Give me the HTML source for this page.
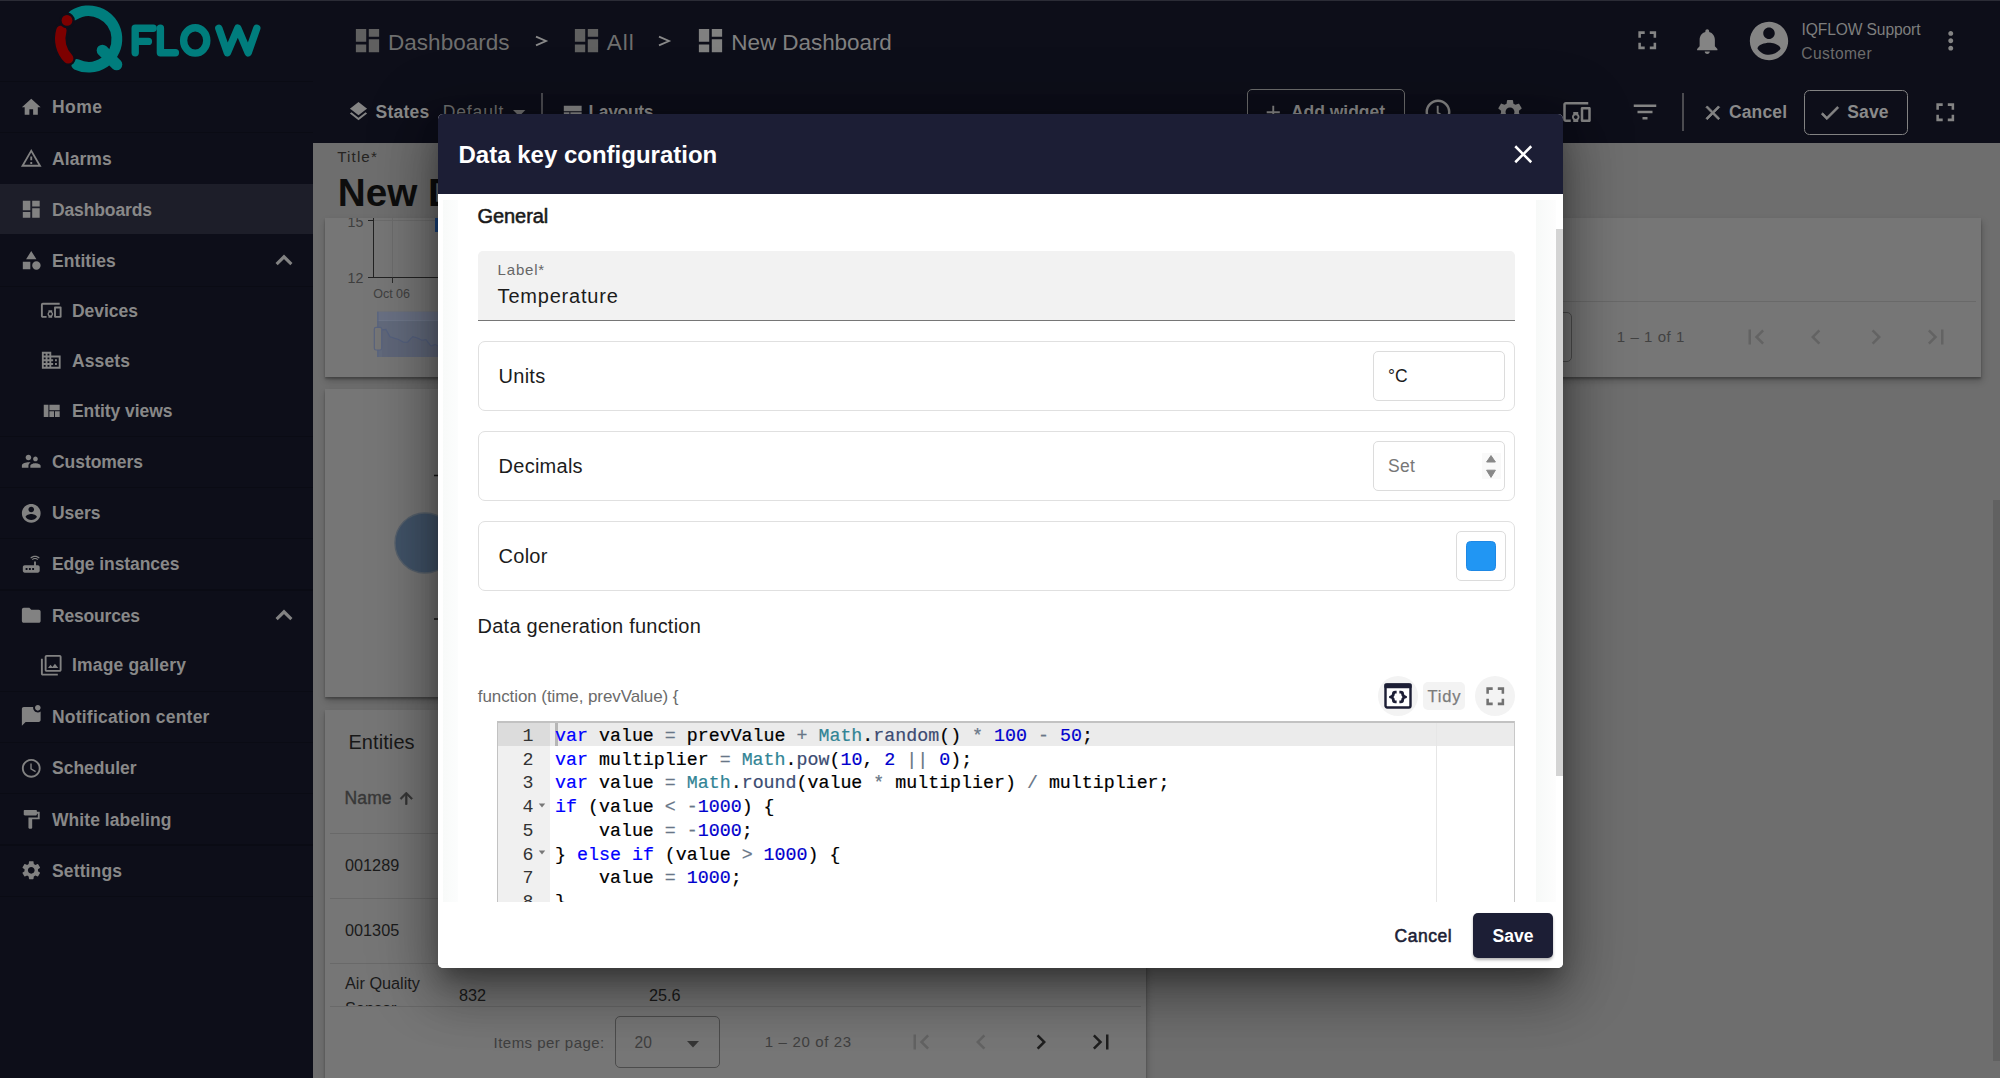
<!DOCTYPE html>
<html>
<head>
<meta charset="utf-8">
<title>Data key configuration</title>
<style>
*{box-sizing:border-box;margin:0;padding:0}
html,body{width:2000px;height:1078px;overflow:hidden}
body{position:relative;background:#6e6e6e;font-family:"Liberation Sans",sans-serif;color:#111}
.abs{position:absolute}
.t{position:absolute;white-space:pre}
svg{position:absolute;display:block;overflow:visible}
#side{left:0;top:0;width:312.5px;height:1078px;background:#0d0e19}
#head{left:312px;top:0;width:1688px;height:143px;background:#0d0e19}
#topline{left:0;top:0;width:2000px;height:1.25px;background:#2b2c36}
#main{left:312px;top:143px;width:1688px;height:935px;overflow:hidden}
.mi{font-weight:700;color:#888}
.bc{color:#6e6e6e}
.card{background:#767676;box-shadow:0 2px 2px rgba(0,0,0,.25),1px 4px 7px rgba(0,0,0,.22)}
#dlg{left:437.5px;top:113.75px;width:1125px;height:853.75px;background:#fff;border-radius:5px;box-shadow:0 14px 20px -6px rgba(0,0,0,.3),0 30px 48px 4px rgba(0,0,0,.2),0 8px 60px 12px rgba(0,0,0,.25);overflow:hidden}
.mono{font-family:"Liberation Mono",monospace}

</style>
</head>
<body>
<div id="head" class="abs">
<svg viewBox="0 0 24 24" width="31" height="31" style="left:40.20px;top:25.10px;"><path fill="#606060" d="M3 13h8V3H3v10zm0 8h8v-6H3v6zm10 0h8V11h-8v10zm0-18v6h8V3h-8z"/></svg>
<div class="t bc" style="letter-spacing:0.030px;left:76px;top:30px;font-size:22.5px;line-height:25px;">Dashboards</div>
<svg width="14" height="14" viewBox="0 0 14 14" style="left:222px;top:33.6px"><path d="M2 2.6L12 7L2 11.4" fill="none" stroke="#8a8a8a" stroke-width="1.8"/></svg>
<svg viewBox="0 0 24 24" width="31" height="31" style="left:259.20px;top:25.10px;"><path fill="#606060" d="M3 13h8V3H3v10zm0 8h8v-6H3v6zm10 0h8V11h-8v10zm0-18v6h8V3h-8z"/></svg>
<div class="t bc" style="letter-spacing:0.992px;left:294.70000000000005px;top:30px;font-size:22.5px;line-height:25px;">All</div>
<svg width="14" height="14" viewBox="0 0 14 14" style="left:345px;top:33.6px"><path d="M2 2.6L12 7L2 11.4" fill="none" stroke="#8a8a8a" stroke-width="1.8"/></svg>
<svg viewBox="0 0 24 24" width="31" height="31" style="left:383.00px;top:25.10px;"><path fill="#808080" d="M3 13h8V3H3v10zm0 8h8v-6H3v6zm10 0h8V11h-8v10zm0-18v6h8V3h-8z"/></svg>
<div class="t " style="letter-spacing:-0.062px;left:419.29999999999995px;top:30px;font-size:22.5px;line-height:25px;color:#808080">New Dashboard</div>
<svg viewBox="0 0 24 24" width="30.5" height="30.5" style="left:1319.95px;top:25.45px;"><path fill="#848484" d="M7 14H5v5h5v-2H7v-3zm-2-4h2V7h3V5H5v5zm12 7h-3v2h5v-5h-2v3zM14 5v2h3v3h2V5h-5z"/></svg>
<svg viewBox="0 0 24 24" width="30.5" height="30.5" style="left:1379.75px;top:25.55px;"><path fill="#848484" d="M12 22c1.1 0 2-.9 2-2h-4c0 1.1.89 2 2 2zm6-6v-5c0-3.07-1.64-5.64-4.5-6.32V4c0-.83-.67-1.5-1.5-1.5s-1.5.67-1.5 1.5v.68C7.63 5.36 6 7.92 6 11v5l-2 2v1h16v-1l-2-2z"/></svg>
<svg viewBox="0 0 24 24" width="46" height="46" style="left:1434.20px;top:17.80px;"><path fill="#848484" d="M12 2C6.48 2 2 6.48 2 12s4.48 10 10 10 10-4.48 10-10S17.52 2 12 2zm0 3c1.66 0 3 1.34 3 3s-1.34 3-3 3-3-1.34-3-3 1.34-3 3-3zm0 14.2c-2.5 0-4.71-1.28-6-3.22.03-1.99 4-3.08 6-3.08 1.99 0 5.97 1.09 6 3.08-1.29 1.94-3.5 3.22-6 3.22z"/></svg>
<div class="t " style="letter-spacing:-0.113px;left:1489.5px;top:21px;font-size:15.6px;line-height:17px;color:#7e7e7e">IQFLOW Support</div>
<div class="t " style="letter-spacing:0.387px;left:1489.3px;top:45px;font-size:15.6px;line-height:17px;color:#6c6c6c">Customer</div>
<svg viewBox="0 0 24 24" width="29.5" height="29.5" style="left:1624.05px;top:26.25px;"><path fill="#848484" d="M12 8c1.1 0 2-.9 2-2s-.9-2-2-2-2 .9-2 2 .9 2 2 2zm0 2c-1.1 0-2 .9-2 2s.9 2 2 2 2-.9 2-2-.9-2-2-2zm0 6c-1.1 0-2 .9-2 2s.9 2 2 2 2-.9 2-2-.9-2-2-2z"/></svg>
<svg viewBox="0 0 24 24" width="23" height="23" style="left:35.25px;top:100.00px;"><path fill="#848484" d="M11.99 18.54l-7.37-5.73L3 14.07l9 7 9-7-1.63-1.27-7.38 5.74zM12 16l7.36-5.73L21 9l-9-7-9 7 1.63 1.27L12 16z"/></svg>
<div class="t mi" style="letter-spacing:0.214px;left:63.60000000000002px;top:102px;font-size:17.5px;line-height:20px;color:#8a8a8a">States</div>
<div class="t " style="letter-spacing:0.841px;left:130.8px;top:102px;font-size:17.5px;line-height:20px;color:#6e6e6e">Default</div>
<svg width="14" height="8" viewBox="0 0 14 8" style="left:200.79999999999995px;top:110px"><path d="M0 0H12.4L6.2 6.2z" fill="#6e6e6e"/></svg>
<div class="abs " style="left:229.20000000000005px;top:93px;width:1.5px;height:45px;background:#4b4b50"></div>
<svg viewBox="0 0 24 24" width="22.5" height="22.5" style="left:249.05px;top:100.75px;"><path fill="#848484" d="M3 19h6v-7H3v7zm7 0h12v-7H10v7zM3 5v6h19V5H3z"/></svg>
<div class="t mi" style="letter-spacing:-0.352px;left:276.5px;top:102px;font-size:17.5px;line-height:20px;color:#8a8a8a">Layouts</div>
<div class="abs " style="left:934.5999999999999px;top:89.2px;width:158.4px;height:46px;border:1.3px solid #6c6c6c;border-radius:5px"></div>
<svg viewBox="0 0 24 24" width="22.5" height="22.5" style="left:950.25px;top:100.75px;"><path fill="#848484" d="M19 13h-6v6h-2v-6H5v-2h6V5h2v6h6v2z"/></svg>
<div class="t mi" style="letter-spacing:-0.033px;left:979px;top:102px;font-size:17.5px;line-height:20px;color:#8a8a8a">Add widget</div>
<svg viewBox="0 0 24 24" width="30" height="30" style="left:1110.50px;top:96.90px;"><path fill="#848484" d="M11.99 2C6.47 2 2 6.48 2 12s4.47 10 9.99 10C17.52 22 22 17.52 22 12S17.52 2 11.99 2zM12 20c-4.42 0-8-3.58-8-8s3.58-8 8-8 8 3.58 8 8-3.58 8-8 8zm.5-13H11v6l5.25 3.15.75-1.23-4.5-2.67z"/></svg>
<svg viewBox="0 0 24 24" width="30" height="30" style="left:1182.50px;top:96.90px;"><path fill="#848484" d="M19.14 12.94c.04-.3.06-.61.06-.94 0-.32-.02-.64-.07-.94l2.03-1.58c.18-.14.23-.41.12-.61l-1.92-3.32c-.12-.22-.37-.29-.59-.22l-2.39.96c-.5-.38-1.03-.7-1.62-.94l-.36-2.54c-.04-.24-.24-.41-.48-.41h-3.84c-.24 0-.43.17-.47.41l-.36 2.54c-.59.24-1.13.57-1.62.94l-2.39-.96c-.22-.08-.47 0-.59.22L2.74 8.87c-.12.21-.08.47.12.61l2.03 1.58c-.05.3-.09.63-.09.94s.02.64.07.94l-2.03 1.58c-.18.14-.23.41-.12.61l1.92 3.32c.12.22.37.29.59.22l2.39-.96c.5.38 1.03.7 1.62.94l.36 2.54c.05.24.24.41.48.41h3.84c.24 0 .44-.17.47-.41l.36-2.54c.59-.24 1.13-.56 1.62-.94l2.39.96c.22.08.47 0 .59-.22l1.92-3.32c.12-.22.07-.47-.12-.61l-2.01-1.58zM12 15.6c-1.98 0-3.6-1.62-3.6-3.6s1.62-3.6 3.6-3.6 3.6 1.62 3.6 3.6-1.62 3.6-3.6 3.6z"/></svg>
<svg viewBox="0 0 24 24" width="30" height="30" style="left:1250.30px;top:97.00px;"><path fill="#848484" d="M3 6h18V4H3c-1.1 0-2 .9-2 2v12c0 1.1.9 2 2 2h4v-2H3V6zm10 6H9v1.78c-.61.55-1 1.33-1 2.22s.39 1.67 1 2.22V20h4v-1.78c.61-.55 1-1.34 1-2.22s-.39-1.67-1-2.22V12zm-2 5.5c-.83 0-1.5-.67-1.5-1.5s.67-1.5 1.5-1.5 1.5.67 1.5 1.5-.67 1.5-1.5 1.5zM22 8h-6c-.5 0-1 .5-1 1v10c0 .5.5 1 1 1h6c.5 0 1-.5 1-1V9c0-.5-.5-1-1-1zm-1 10h-4v-8h4v8z"/></svg>
<svg viewBox="0 0 24 24" width="30" height="30" style="left:1317.70px;top:97.00px;"><path fill="#848484" d="M10 18h4v-2h-4v2zM3 6v2h18V6H3zm3 7h12v-2H6v2z"/></svg>
<div class="abs " style="left:1370px;top:93px;width:1.6px;height:37.6px;background:#4b4b50"></div>
<svg viewBox="0 0 24 24" width="23.6" height="23.6" style="left:1388.70px;top:100.50px;stroke:#848484;stroke-width:0.8px"><path fill="#848484" d="M19 6.41L17.59 5 12 10.59 6.41 5 5 6.41 10.59 12 5 17.59 6.41 19 12 13.41 17.59 19 19 17.59 13.41 12z"/></svg>
<div class="t mi" style="letter-spacing:0.122px;left:1417px;top:102px;font-size:17.5px;line-height:20px;color:#8a8a8a">Cancel</div>
<div class="abs " style="left:1492px;top:89.6px;width:104px;height:45px;border:1.5px solid #828282;border-radius:5.5px"></div>
<svg viewBox="0 0 24 24" width="23.6" height="23.6" style="left:1506.20px;top:100.50px;stroke:#848484;stroke-width:0.8px"><path fill="#848484" d="M9 16.2L4.8 12l-1.4 1.4L9 19 21 7l-1.4-1.4L9 16.2z"/></svg>
<div class="t mi" style="letter-spacing:0.142px;left:1535.3px;top:102px;font-size:17.5px;line-height:20px;color:#8a8a8a">Save</div>
<svg viewBox="0 0 24 24" width="30.5" height="30.5" style="left:1618.15px;top:96.75px;"><path fill="#848484" d="M7 14H5v5h5v-2H7v-3zm-2-4h2V7h3V5H5v5zm12 7h-3v2h5v-5h-2v3zM14 5v2h3v3h2V5h-5z"/></svg>
</div>
<div id="main" class="abs">
<div class="abs card" style="left:13px;top:75px;width:821px;height:158.8px;overflow:hidden"><div class="abs " style="left:48px;top:2.4000000000000057px;width:800px;height:1px;background:#6c6c6c"></div><div class="abs " style="left:66.5px;top:0px;width:1px;height:60px;background:#6c6c6c"></div><div class="abs " style="left:47.69999999999999px;top:0px;width:1.5px;height:60px;background:#222"></div><div class="abs " style="left:42.5px;top:58.60000000000002px;width:800px;height:1.4px;background:#222"></div><div class="abs " style="left:42.5px;top:2.1999999999999886px;width:6px;height:1.3px;background:#222"></div><div class="abs " style="left:66.5px;top:59px;width:1px;height:5.6px;background:#2c2c2c"></div><div class="abs " style="left:110.19999999999999px;top:0px;width:3px;height:13.8px;background:#1a417a"></div><div class="t " style="left:22.5px;top:-4px;font-size:14.2px;line-height:16px;color:#3e3e3e">15</div><div class="t " style="left:22.5px;top:52px;font-size:14.2px;line-height:16px;color:#3e3e3e">12</div><div class="t " style="letter-spacing:-0.046px;left:48.30000000000001px;top:69px;font-size:12.5px;line-height:14px;color:#404040">Oct 06</div><svg width="200" height="60" viewBox="0 0 200 60" style="left:45px;top:87px">
<rect x="7.3" y="6.8" width="200" height="45.2" fill="#626a7c"/>
<rect x="7.3" y="6.8" width="200" height="8.4" fill="#697083"/>
<path d="M7.3 15.6H200" stroke="#70788b" stroke-width="1" fill="none"/>
<path d="M12.1 24.9L15.9 24.4L20.1 31.9L28.5 34.4L33.5 37.2L37.6 37.2L42.7 31.6L46.8 32.7L51.8 35.2L56 34.7L61 41.1L65.2 39.4L68 41.1V52H12.1z" fill="#5f6679" stroke="none"/>
<path d="M12.1 24.9L15.9 24.4L20.1 31.9L28.5 34.4L33.5 37.2L37.6 37.2L42.7 31.6L46.8 32.7L51.8 35.2L56 34.7L61 41.1L65.2 39.4L68 41.1" fill="none" stroke="#54607e" stroke-width="1.1"/>
<path d="M7.9 6.8V52" stroke="#5a6580" stroke-width="1.2" fill="none"/>
<rect x="4.3" y="22.4" width="7.4" height="22.6" rx="1.8" fill="#767676" stroke="#59637e" stroke-width="1.2"/>
</svg></div>
<div class="t " style="letter-spacing:1.091px;left:25.30000000000001px;top:5px;font-size:15.2px;line-height:17px;color:#262422">Title*</div>
<div class="t " style="left:25.80000000000001px;top:28px;font-size:38.7px;line-height:43px;color:#0d0d0d;font-weight:700">New Dashboard</div>
<div class="abs card" style="left:13px;top:246px;width:821px;height:308px;"><svg width="200" height="308" viewBox="0 0 200 308" style="left:0;top:0">
<circle cx="100" cy="154" r="30" fill="#415368" stroke="#57616c" stroke-width="1.4"/>
<path d="M109 86.5h5M109 230h5" stroke="#161616" stroke-width="1.4"/></svg></div>
<div class="abs card" style="left:13px;top:567px;width:821px;height:400px;"><div class="t " style="letter-spacing:0.087px;left:23.399999999999977px;top:21px;font-size:20px;line-height:22px;color:#181818">Entities</div><div class="t " style="letter-spacing:0.104px;left:19.600000000000023px;top:78px;font-size:17.5px;line-height:20px;color:#383838;-webkit-text-stroke:0.4px #383838">Name</div><svg viewBox="0 0 24 24" width="18.6" height="18.6" style="left:72.10px;top:78.70px;stroke:#353535;stroke-width:0.9px"><path fill="#353535" d="M4 12l1.41 1.41L11 7.83V20h2V7.83l5.58 5.59L20 12l-8-8-8 8z"/></svg><div class="abs " style="left:5px;top:122.5px;width:810.5px;height:1.2px;background:#696969"></div><div class="abs " style="left:5px;top:187.5px;width:810.5px;height:1.2px;background:#696969"></div><div class="abs " style="left:5px;top:252.5px;width:810.5px;height:1.2px;background:#696969"></div><div class="abs " style="left:5px;top:295.79999999999995px;width:810.5px;height:1.2px;background:#696969"></div><div class="t " style="left:20px;top:146px;font-size:16.25px;line-height:18px;color:#1b1b1b">001289</div><div class="t " style="left:20px;top:211px;font-size:16.25px;line-height:18px;color:#1b1b1b">001305</div><div class="abs " style="left:0px;top:253.70000000000005px;width:821px;height:42px;overflow:hidden"><div class="t " style="left:20px;top:10.3px;font-size:16.25px;line-height:18px;color:#1b1b1b">Air Quality</div><div class="t " style="left:20px;top:35.3px;font-size:16.25px;line-height:18px;color:#1b1b1b">Sensor</div><div class="t " style="left:134px;top:22.3px;font-size:16.25px;line-height:18px;color:#1b1b1b">832</div><div class="t " style="left:324px;top:22.3px;font-size:16.25px;line-height:18px;color:#1b1b1b">25.6</div></div><div class="t " style="letter-spacing:0.455px;left:168.60000000000002px;top:324px;font-size:15px;line-height:17px;color:#404040">Items per page:</div><div class="abs " style="left:290px;top:306.29999999999995px;width:104.5px;height:51.4px;border:1.3px solid #4c4c4c;border-radius:5px"></div><div class="t " style="letter-spacing:0.041px;left:309.6px;top:324px;font-size:15.6px;line-height:17px;color:#404040">20</div><svg width="14" height="8" viewBox="0 0 14 8" style="left:362.4px;top:330.79999999999995px"><path d="M0 0H12L6 6.4z" fill="#363636"/></svg><div class="t " style="letter-spacing:0.651px;left:439.79999999999995px;top:323px;font-size:15px;line-height:17px;color:#404040">1 – 20 of 23</div><svg viewBox="0 0 24 24" width="30" height="30" style="left:581.00px;top:317.00px;"><path fill="#636363" d="M18.41 16.59L13.82 12l4.59-4.59L17 6l-6 6 6 6zM6 6h2v12H6z"/></svg><svg viewBox="0 0 24 24" width="30" height="30" style="left:641.00px;top:317.00px;"><path fill="#636363" d="M15.41 7.41L14 6l-6 6 6 6 1.41-1.41L10.83 12z"/></svg><svg viewBox="0 0 24 24" width="30" height="30" style="left:701.00px;top:317.00px;"><path fill="#1f1f1f" d="M10 6L8.59 7.41 13.17 12l-4.58 4.59L10 18l6-6z"/></svg><svg viewBox="0 0 24 24" width="30" height="30" style="left:761.00px;top:317.00px;"><path fill="#1f1f1f" d="M5.59 7.41L10.18 12l-4.59 4.59L7 18l6-6-6-6zM16 6h2v12h-2z"/></svg></div>
<div class="abs card" style="left:848px;top:75px;width:821px;height:158.8px;"><div class="abs " style="left:5px;top:82.80000000000001px;width:810.5px;height:1.2px;background:#696969"></div><div class="abs " style="left:308px;top:93.5px;width:104px;height:50.5px;border:1.3px solid #4e4e4e;border-radius:5px"></div><div class="t " style="letter-spacing:0.560px;left:456.79999999999995px;top:110px;font-size:15px;line-height:17px;color:#424242">1 – 1 of 1</div><svg viewBox="0 0 24 24" width="30" height="30" style="left:581.00px;top:104.00px;"><path fill="#636363" d="M18.41 16.59L13.82 12l4.59-4.59L17 6l-6 6 6 6zM6 6h2v12H6z"/></svg><svg viewBox="0 0 24 24" width="30" height="30" style="left:641.00px;top:104.00px;"><path fill="#636363" d="M15.41 7.41L14 6l-6 6 6 6 1.41-1.41L10.83 12z"/></svg><svg viewBox="0 0 24 24" width="30" height="30" style="left:700.50px;top:104.00px;"><path fill="#636363" d="M10 6L8.59 7.41 13.17 12l-4.58 4.59L10 18l6-6z"/></svg><svg viewBox="0 0 24 24" width="30" height="30" style="left:760.50px;top:104.00px;"><path fill="#636363" d="M5.59 7.41L10.18 12l-4.59 4.59L7 18l6-6-6-6zM16 6h2v12h-2z"/></svg></div>
<div class="abs " style="left:1681px;top:356.5px;width:7px;height:561px;background:#616161"></div>
</div>
<div id="side" class="abs">
<div class="abs " style="left:0px;top:184.2px;width:312.5px;height:50.1px;background:#1d1e29"></div>
<svg width="312" height="84" viewBox="0 0 312 84" style="left:0;top:0">
<g fill="none" stroke-linecap="round" stroke-linejoin="round">
<path d="M73.4 15.3 A28.2 28.2 0 1 1 76.6 64.5" stroke="#007d7d" stroke-width="10.8"/>
<path d="M102.4 50.4 L116.6 64.6" stroke="#007d7d" stroke-width="11.4"/>
<path d="M61.4 30.6 A28.2 28.2 0 0 0 68.2 58.4" stroke="#0d0e19" stroke-width="14.8"/>
<path d="M61.4 30.6 A28.2 28.2 0 0 0 68.2 58.4" stroke="#7d0000" stroke-width="10.4"/>
<circle cx="67" cy="20.4" r="7.8" fill="#0d0e19" stroke="none"/>
<circle cx="67" cy="20.4" r="5.4" fill="#7d0000" stroke="none"/>
<g stroke="#007d7d" stroke-width="7.4">
<path d="M135.2 52.8V28.2H153.2M135.2 41.4H148.4"/>
<path d="M160.4 28.2V52.8H175.4"/>
<ellipse cx="195.2" cy="40.4" rx="11.6" ry="12.7"/>
<path d="M218.8 28.2L227.4 52.8L237.8 28.2L248.2 52.8L256.8 28.2"/>
</g></g></svg>
<svg viewBox="0 0 24 24" width="22.5" height="22.5" style="left:20.05px;top:95.75px;"><path fill="#828282" d="M10 20v-6h4v6h5v-8h3L12 3 2 12h3v8z"/></svg>
<div class="t mi" style="letter-spacing:0.458px;left:52px;top:97px;font-size:17.5px;line-height:20px;">Home</div>
<svg viewBox="0 0 24 24" width="22.5" height="22.5" style="left:20.05px;top:147.05px;"><path fill="#828282" d="M12 5.99L19.53 19H4.47L12 5.99M12 2L1 21h22L12 2zm1 14h-2v2h2v-2zm0-6h-2v4h2v-4z"/></svg>
<div class="t mi" style="letter-spacing:0.071px;left:52px;top:149px;font-size:17.5px;line-height:20px;">Alarms</div>
<svg viewBox="0 0 24 24" width="22.5" height="22.5" style="left:20.05px;top:198.25px;"><path fill="#828282" d="M3 13h8V3H3v10zm0 8h8v-6H3v6zm10 0h8V11h-8v10zm0-18v6h8V3h-8z"/></svg>
<div class="t mi" style="letter-spacing:-0.127px;left:52px;top:200px;font-size:17.5px;line-height:20px;">Dashboards</div>
<svg viewBox="0 0 24 24" width="22.5" height="22.5" style="left:20.05px;top:249.25px;"><path fill="#828282" d="M12 2l-5.5 9h11z M22 17.5a4.5 4.5 0 1 1-9 0a4.5 4.5 0 1 1 9 0z M3 13.5h8v8H3z"/></svg>
<div class="t mi" style="letter-spacing:0.069px;left:52px;top:251px;font-size:17.5px;line-height:20px;">Entities</div>
<svg viewBox="0 0 24 24" width="22.5" height="22.5" style="left:40.05px;top:299.35px;"><path fill="#828282" d="M3 6h18V4H3c-1.1 0-2 .9-2 2v12c0 1.1.9 2 2 2h4v-2H3V6zm10 6H9v1.78c-.61.55-1 1.33-1 2.22s.39 1.67 1 2.22V20h4v-1.78c.61-.55 1-1.34 1-2.22s-.39-1.67-1-2.22V12zm-2 5.5c-.83 0-1.5-.67-1.5-1.5s.67-1.5 1.5-1.5 1.5.67 1.5 1.5-.67 1.5-1.5 1.5zM22 8h-6c-.5 0-1 .5-1 1v10c0 .5.5 1 1 1h6c.5 0 1-.5 1-1V9c0-.5-.5-1-1-1zm-1 10h-4v-8h4v8z"/></svg>
<div class="t mi" style="letter-spacing:-0.029px;left:72px;top:301px;font-size:17.5px;line-height:20px;">Devices</div>
<svg viewBox="0 0 24 24" width="22.5" height="22.5" style="left:40.05px;top:349.45px;"><path fill="#828282" d="M12 7V3H2v18h20V7H12zM6 19H4v-2h2v2zm0-4H4v-2h2v2zm0-4H4V9h2v2zm0-4H4V5h2v2zm4 12H8v-2h2v2zm0-4H8v-2h2v2zm0-4H8V9h2v2zm0-4H8V5h2v2zm10 12h-8v-2h2v-2h-2v-2h2v-2h-2V9h8v10zm-2-8h-2v2h2v-2zm0 4h-2v2h2v-2z"/></svg>
<div class="t mi" style="letter-spacing:0.119px;left:72px;top:351px;font-size:17.5px;line-height:20px;">Assets</div>
<svg viewBox="0 0 24 24" width="22.5" height="22.5" style="left:40.05px;top:399.75px;"><path fill="#828282" d="M10 18h5v-6h-5v6zm-6 0h5V5H4v13zm12 0h5v-6h-5v6zM10 5v6h11V5H10z"/></svg>
<div class="t mi" style="letter-spacing:-0.051px;left:72px;top:401px;font-size:17.5px;line-height:20px;">Entity views</div>
<svg viewBox="0 0 24 24" width="22.5" height="22.5" style="left:20.05px;top:450.35px;"><path fill="#828282" d="M16.5 12c1.38 0 2.49-1.12 2.49-2.5S17.88 7 16.5 7C15.12 7 14 8.12 14 9.5s1.12 2.5 2.5 2.5zM9 11c1.66 0 2.99-1.34 2.99-3S10.66 5 9 5C7.34 5 6 6.34 6 8s1.34 3 3 3zm7.5 3c-1.83 0-5.5.92-5.5 2.75V19h11v-2.25c0-1.83-3.67-2.75-5.5-2.75zM9 13c-2.33 0-7 1.17-7 3.5V19h7v-2.25c0-.85.33-2.34 2.37-3.47C10.5 13.1 9.66 13 9 13z"/></svg>
<div class="t mi" style="letter-spacing:-0.053px;left:52px;top:452px;font-size:17.5px;line-height:20px;">Customers</div>
<svg viewBox="0 0 24 24" width="22.5" height="22.5" style="left:20.05px;top:501.75px;"><path fill="#828282" d="M12 2C6.48 2 2 6.48 2 12s4.48 10 10 10 10-4.48 10-10S17.52 2 12 2zm0 3c1.66 0 3 1.34 3 3s-1.34 3-3 3-3-1.34-3-3 1.34-3 3-3zm0 14.2c-2.5 0-4.71-1.28-6-3.22.03-1.99 4-3.08 6-3.08 1.99 0 5.97 1.09 6 3.08-1.29 1.94-3.5 3.22-6 3.22z"/></svg>
<div class="t mi" style="letter-spacing:-0.064px;left:52px;top:503px;font-size:17.5px;line-height:20px;">Users</div>
<svg viewBox="0 0 24 24" width="22.5" height="22.5" style="left:20.05px;top:552.85px;"><path fill="#828282" d="M20.2 5.9l.8-.8C19.6 3.7 17.8 3 16 3s-3.6.7-5 2.1l.8.8C13 4.8 14.5 4.2 16 4.2s3 .6 4.2 1.7zm-.9.8c-.9-.9-2.1-1.4-3.3-1.4s-2.4.5-3.3 1.4l.8.8c.7-.7 1.6-1 2.5-1 .9 0 1.8.3 2.5 1l.8-.8zM19 13h-2V9h-2v4H5c-1.1 0-2 .9-2 2v4c0 1.1.9 2 2 2h14c1.1 0 2-.9 2-2v-4c0-1.1-.9-2-2-2zM8 18H6v-2h2v2zm3.5 0h-2v-2h2v2zm3.5 0h-2v-2h2v2z"/></svg>
<div class="t mi" style="letter-spacing:-0.076px;left:52px;top:554px;font-size:17.5px;line-height:20px;">Edge instances</div>
<svg viewBox="0 0 24 24" width="22.5" height="22.5" style="left:20.05px;top:604.25px;"><path fill="#828282" d="M10 4H4c-1.1 0-1.99.9-1.99 2L2 18c0 1.1.9 2 2 2h16c1.1 0 2-.9 2-2V8c0-1.1-.9-2-2-2h-8l-2-2z"/></svg>
<div class="t mi" style="letter-spacing:-0.188px;left:52px;top:606px;font-size:17.5px;line-height:20px;">Resources</div>
<svg viewBox="0 0 24 24" width="22.5" height="22.5" style="left:40.05px;top:654.15px;"><path fill="#828282" d="M15.96 10.29l-2.75 3.54-1.96-2.36L8.5 15h11l-3.54-4.71zM3 5H1v16c0 1.1.9 2 2 2h16v-2H3V5zm18-4H7c-1.1 0-2 .9-2 2v14c0 1.1.9 2 2 2h14c1.1 0 2-.9 2-2V3c0-1.1-.9-2-2-2zm0 16H7V3h14v14z"/></svg>
<div class="t mi" style="letter-spacing:0.169px;left:72px;top:655px;font-size:17.5px;line-height:20px;">Image gallery</div>
<svg viewBox="0 0 24 24" width="22.5" height="22.5" style="left:20.05px;top:705.45px;"><path fill="#828282" d="M22 6.98V16c0 1.1-.9 2-2 2H6l-4 4V4c0-1.1.9-2 2-2h10.1c-.06.32-.1.66-.1 1 0 2.76 2.24 5 5 5 1.13 0 2.16-.39 3-1.02zM16 3c0 1.66 1.34 3 3 3s3-1.34 3-3-1.34-3-3-3-3 1.34-3 3z"/></svg>
<div class="t mi" style="letter-spacing:0.209px;left:52px;top:707px;font-size:17.5px;line-height:20px;">Notification center</div>
<svg viewBox="0 0 24 24" width="22.5" height="22.5" style="left:20.05px;top:756.65px;"><path fill="#828282" d="M11.99 2C6.47 2 2 6.48 2 12s4.47 10 9.99 10C17.52 22 22 17.52 22 12S17.52 2 11.99 2zM12 20c-4.42 0-8-3.58-8-8s3.58-8 8-8 8 3.58 8 8-3.58 8-8 8zm.5-13H11v6l5.25 3.15.75-1.23-4.5-2.67z"/></svg>
<div class="t mi" style="letter-spacing:-0.003px;left:52px;top:758px;font-size:17.5px;line-height:20px;">Scheduler</div>
<svg viewBox="0 0 24 24" width="22.5" height="22.5" style="left:20.05px;top:807.95px;"><path fill="#828282" d="M18 4V3c0-.55-.45-1-1-1H5c-.55 0-1 .45-1 1v4c0 .55.45 1 1 1h12c.55 0 1-.45 1-1V6h1v4H9v11c0 .55.45 1 1 1h2c.55 0 1-.45 1-1v-9h8V4h-3z"/></svg>
<div class="t mi" style="letter-spacing:0.060px;left:52px;top:810px;font-size:17.5px;line-height:20px;">White labeling</div>
<svg viewBox="0 0 24 24" width="22.5" height="22.5" style="left:20.05px;top:859.05px;"><path fill="#828282" d="M19.14 12.94c.04-.3.06-.61.06-.94 0-.32-.02-.64-.07-.94l2.03-1.58c.18-.14.23-.41.12-.61l-1.92-3.32c-.12-.22-.37-.29-.59-.22l-2.39.96c-.5-.38-1.03-.7-1.62-.94l-.36-2.54c-.04-.24-.24-.41-.48-.41h-3.84c-.24 0-.43.17-.47.41l-.36 2.54c-.59.24-1.13.57-1.62.94l-2.39-.96c-.22-.08-.47 0-.59.22L2.74 8.87c-.12.21-.08.47.12.61l2.03 1.58c-.05.3-.09.63-.09.94s.02.64.07.94l-2.03 1.58c-.18.14-.23.41-.12.61l1.92 3.32c.12.22.37.29.59.22l2.39-.96c.5.38 1.03.7 1.62.94l.36 2.54c.05.24.24.41.48.41h3.84c.24 0 .44-.17.47-.41l.36-2.54c.59-.24 1.13-.56 1.62-.94l2.39.96c.22.08.47 0 .59-.22l1.92-3.32c.12-.22.07-.47-.12-.61l-2.01-1.58zM12 15.6c-1.98 0-3.6-1.62-3.6-3.6s1.62-3.6 3.6-3.6 3.6 1.62 3.6 3.6-1.62 3.6-3.6 3.6z"/></svg>
<div class="t mi" style="letter-spacing:0.136px;left:52px;top:861px;font-size:17.5px;line-height:20px;">Settings</div>
<svg width="20" height="14" viewBox="0 0 20 14" style="left:273.5px;top:253.10000000000002px"><path d="M2.6 11.2L10 3.8L17.4 11.2" fill="none" stroke="#828282" stroke-width="3.1"/></svg>
<svg width="20" height="14" viewBox="0 0 20 14" style="left:273.5px;top:608.0px"><path d="M2.6 11.2L10 3.8L17.4 11.2" fill="none" stroke="#828282" stroke-width="3.1"/></svg>
<div class="abs " style="left:0px;top:80.80000000000001px;width:312.5px;height:1.25px;background:rgba(0,0,0,.16)"></div>
<div class="abs " style="left:0px;top:132.0px;width:312.5px;height:1.25px;background:rgba(0,0,0,.16)"></div>
<div class="abs " style="left:0px;top:285.79999999999995px;width:312.5px;height:1.25px;background:rgba(0,0,0,.16)"></div>
<div class="abs " style="left:0px;top:435.79999999999995px;width:312.5px;height:1.25px;background:rgba(0,0,0,.16)"></div>
<div class="abs " style="left:0px;top:487.0px;width:312.5px;height:1.25px;background:rgba(0,0,0,.16)"></div>
<div class="abs " style="left:0px;top:538.1999999999999px;width:312.5px;height:1.25px;background:rgba(0,0,0,.16)"></div>
<div class="abs " style="left:0px;top:589.4px;width:312.5px;height:1.25px;background:rgba(0,0,0,.16)"></div>
<div class="abs " style="left:0px;top:690.8px;width:312.5px;height:1.25px;background:rgba(0,0,0,.16)"></div>
<div class="abs " style="left:0px;top:742.0px;width:312.5px;height:1.25px;background:rgba(0,0,0,.16)"></div>
<div class="abs " style="left:0px;top:793.1999999999999px;width:312.5px;height:1.25px;background:rgba(0,0,0,.16)"></div>
<div class="abs " style="left:0px;top:844.4px;width:312.5px;height:1.25px;background:rgba(0,0,0,.16)"></div>
<div class="abs " style="left:0px;top:895.6999999999999px;width:312.5px;height:1.25px;background:rgba(0,0,0,.16)"></div>
</div>
<div id="topline" class="abs"></div>
<div id="dlg" class="abs">
<div class="abs " style="left:0.0px;top:0.0px;width:1125px;height:80px;background:#1c1e35"></div>
<div class="t " style="left:21.0px;top:27.25px;font-size:24px;line-height:27px;color:#fff;font-weight:700">Data key configuration</div>
<svg viewBox="0 0 24 24" width="30.5" height="30.5" style="left:1070.35px;top:25.40px;"><path fill="#fff" d="M19 6.41L17.59 5 12 10.59 6.41 5 5 6.41 10.59 12 5 17.59 6.41 19 12 13.41 17.59 19 19 17.59 13.41 12z"/></svg>
<div class="abs " style="left:5.5px;top:85.75px;width:14.5px;height:702px;background:linear-gradient(90deg,#f8faf9,#fcfdfd)"></div>
<div class="abs " style="left:1098.2px;top:85.75px;width:20px;height:702px;background:linear-gradient(90deg,#f7f9f8,#fdfdfd)"></div>
<div class="abs " style="left:1118.2px;top:115.15px;width:7px;height:546.7px;background:#d4d4d4"></div>
<div class="t " style="letter-spacing:-0.093px;left:40.10000000000002px;top:91.25px;font-size:20px;line-height:22px;color:#1a1a1a;-webkit-text-stroke:0.55px #1a1a1a">General</div>
<div class="abs " style="left:40.0px;top:137.45px;width:1037.5px;height:69.6px;background:#f2f2f2;border-radius:5px 5px 0 0;border-bottom:1.3px solid #767676"></div>
<div class="t " style="letter-spacing:0.811px;left:60.10000000000002px;top:147.25px;font-size:15px;line-height:17px;color:#666">Label*</div>
<div class="t " style="letter-spacing:0.792px;left:60.10000000000002px;top:171.25px;font-size:20px;line-height:22px;color:#1c1c1c">Temperature</div>
<div class="abs " style="left:40.0px;top:227.45px;width:1037.6px;height:69.8px;border:1.3px solid #e0e0e0;border-radius:7px"></div>
<div class="t " style="left:61.10000000000002px;top:251.25px;font-size:20px;line-height:22px;color:#1c1c1c;letter-spacing:0.25px">Units</div>
<div class="abs " style="left:40.0px;top:317.45px;width:1037.6px;height:69.8px;border:1.3px solid #e0e0e0;border-radius:7px"></div>
<div class="t " style="left:61.10000000000002px;top:341.25px;font-size:20px;line-height:22px;color:#1c1c1c;letter-spacing:0.25px">Decimals</div>
<div class="abs " style="left:40.0px;top:407.45px;width:1037.6px;height:69.8px;border:1.3px solid #e0e0e0;border-radius:7px"></div>
<div class="t " style="left:61.10000000000002px;top:431.25px;font-size:20px;line-height:22px;color:#1c1c1c;letter-spacing:0.25px">Color</div>
<div class="abs " style="left:935.4px;top:237.05px;width:132.4px;height:50.3px;border:1.3px solid #dcdcdc;border-radius:5px"></div>
<div class="t " style="left:950.5px;top:252.25px;font-size:17.5px;line-height:20px;color:#1c1c1c">°C</div>
<div class="abs " style="left:935.4px;top:327.05px;width:132.4px;height:50.3px;border:1.3px solid #dcdcdc;border-radius:5px"></div>
<div class="t " style="left:950.5px;top:342.25px;font-size:17.5px;line-height:20px;color:#777;letter-spacing:0.3px">Set</div>
<div class="abs " style="left:1044.5px;top:339.25px;width:18.5px;height:26px;background:#f9f9f9"></div>
<svg width="12" height="26" viewBox="0 0 12 26" style="left:1047.7px;top:339.25px"><path d="M1.6 9L6 2.6L10.4 9zM1.6 17.2L6 24.4L10.4 17.2z" fill="#888" stroke="#888" stroke-width="1" stroke-linejoin="round"/></svg>
<div class="abs " style="left:1018.0px;top:417.55px;width:50px;height:50px;border:1.3px solid #dcdcdc;border-radius:5px"></div>
<div class="abs " style="left:1028.0px;top:427.45px;width:30.2px;height:30.2px;background:#2196f3;border:1px solid #1e88e5;border-radius:4.5px"></div>
<div class="t " style="letter-spacing:0.229px;left:40.10000000000002px;top:501.25px;font-size:20px;line-height:22px;color:#1c1c1c">Data generation function</div>
<div class="t " style="letter-spacing:-0.083px;left:40.30000000000001px;top:573.25px;font-size:17px;line-height:19px;color:#6b6b6b">function (time, prevValue) {</div>
<div class="abs " style="left:940.5px;top:562.45px;width:40px;height:40px;background:#f3f3f3;border-radius:50%"></div>
<svg width="30" height="30" viewBox="0 0 24 24" style="left:945.5px;top:567.45px">
<rect x="2" y="2.85" width="20" height="18.3" rx="1.3" fill="#fff" stroke="#1c1e35" stroke-width="1.95"/>
<rect x="1.1" y="1.9" width="21.8" height="3.8" rx="1" fill="#1c1e35"/>
<path d="M10.9 8.9H9.8C8.7 8.9 8.3 9.5 8.3 10.4C8.3 11.7 7.7 12.4 5.9 12.8C7.7 13.2 8.3 13.9 8.3 15.2C8.3 16.1 8.7 16.7 9.8 16.7H10.9M13.1 8.9H14.2C15.3 8.9 15.7 9.5 15.7 10.4C15.7 11.7 16.3 12.4 18.1 12.8C16.3 13.2 15.7 13.9 15.7 15.2C15.7 16.1 15.3 16.7 14.2 16.7H13.1" fill="none" stroke="#1c1e35" stroke-width="2.25" stroke-linejoin="round" stroke-linecap="butt"/>
</svg>
<div class="abs " style="left:985.5px;top:568.05px;width:42px;height:28.6px;background:#f3f3f3;border-radius:5px"></div>
<div class="t " style="letter-spacing:0.812px;left:990.0999999999999px;top:573.25px;font-size:16.5px;line-height:18px;color:#7c7c7c;-webkit-text-stroke:0.25px #7c7c7c">Tidy</div>
<div class="abs " style="left:1037.9px;top:562.45px;width:40px;height:40px;background:#f3f3f3;border-radius:50%"></div>
<svg viewBox="0 0 24 24" width="30.5" height="30.5" style="left:1042.75px;top:567.20px;"><path fill="#727272" d="M7 14H5v5h5v-2H7v-3zm-2-4h2V7h3V5H5v5zm12 7h-3v2h5v-5h-2v3zM14 5v2h3v3h2V5h-5z"/></svg>
<div class="abs " style="left:59.1px;top:607.55px;width:1018.4px;height:181px;overflow:hidden"><div class="abs " style="left:0.0px;top:0.0px;width:1018.4px;height:181px;background:#fff"></div><div class="abs " style="left:1.4px;top:0.0px;width:52.1px;height:181px;background:#f0f0f0"></div><div class="abs " style="left:1.4px;top:0.0px;width:52.1px;height:24.600000000000023px;background:#dcdcdc"></div><div class="abs " style="left:53.5px;top:0.0px;width:1018.4px;height:24.600000000000023px;background:#ebebeb"></div><div class="abs " style="left:939.0px;top:0.0px;width:1.2px;height:181px;background:#e6e6e6"></div><div class="abs " style="left:58.5px;top:1.3px;width:2.5px;height:23.3px;background:#b6b6b6"></div><div class="abs " style="left:0.0px;top:0.0px;width:1018.4px;height:1.4px;background:#c2c2c2"></div><div class="abs " style="left:0.0px;top:0.0px;width:1.4px;height:181px;background:#c2c2c2"></div><div class="abs " style="left:1017.1px;top:0.0px;width:1.3px;height:181px;background:#c8c8c8"></div><div class="t mono" style="left:58.5px;top:4.7px;font-size:18.3px;line-height:20px;-webkit-text-stroke:0.2px"><span style="color:#0000ff">var</span><span style="color:#000"> value </span><span style="color:#687687">=</span><span style="color:#000"> prevValue </span><span style="color:#687687">+</span><span style="color:#000"> </span><span style="color:#318495">Math</span><span style="color:#000">.</span><span style="color:#3c4c72">random</span><span style="color:#000">() </span><span style="color:#687687">*</span><span style="color:#000"> </span><span style="color:#0000cd">100</span><span style="color:#000"> </span><span style="color:#687687">-</span><span style="color:#000"> </span><span style="color:#0000cd">50</span><span style="color:#000">;</span></div><div class="t mono" style="left:18.4px;top:4.7px;font-size:18.3px;line-height:20px;width:18.6px;text-align:right;color:#333">1</div><div class="t mono" style="left:58.5px;top:28.7px;font-size:18.3px;line-height:20px;-webkit-text-stroke:0.2px"><span style="color:#0000ff">var</span><span style="color:#000"> multiplier </span><span style="color:#687687">=</span><span style="color:#000"> </span><span style="color:#318495">Math</span><span style="color:#000">.</span><span style="color:#3c4c72">pow</span><span style="color:#000">(</span><span style="color:#0000cd">10</span><span style="color:#000">, </span><span style="color:#0000cd">2</span><span style="color:#000"> </span><span style="color:#687687">||</span><span style="color:#000"> </span><span style="color:#0000cd">0</span><span style="color:#000">);</span></div><div class="t mono" style="left:18.4px;top:28.7px;font-size:18.3px;line-height:20px;width:18.6px;text-align:right;color:#333">2</div><div class="t mono" style="left:58.5px;top:51.7px;font-size:18.3px;line-height:20px;-webkit-text-stroke:0.2px"><span style="color:#0000ff">var</span><span style="color:#000"> value </span><span style="color:#687687">=</span><span style="color:#000"> </span><span style="color:#318495">Math</span><span style="color:#000">.</span><span style="color:#3c4c72">round</span><span style="color:#000">(value </span><span style="color:#687687">*</span><span style="color:#000"> multiplier) </span><span style="color:#687687">/</span><span style="color:#000"> multiplier;</span></div><div class="t mono" style="left:18.4px;top:51.7px;font-size:18.3px;line-height:20px;width:18.6px;text-align:right;color:#333">3</div><div class="t mono" style="left:58.5px;top:75.7px;font-size:18.3px;line-height:20px;-webkit-text-stroke:0.2px"><span style="color:#0000ff">if</span><span style="color:#000"> (value </span><span style="color:#687687">&lt;</span><span style="color:#000"> </span><span style="color:#687687">-</span><span style="color:#0000cd">1000</span><span style="color:#000">) {</span></div><div class="t mono" style="left:18.4px;top:75.7px;font-size:18.3px;line-height:20px;width:18.6px;text-align:right;color:#333">4</div><div class="t mono" style="left:58.5px;top:99.7px;font-size:18.3px;line-height:20px;-webkit-text-stroke:0.2px"><span style="color:#000">    value </span><span style="color:#687687">=</span><span style="color:#000"> </span><span style="color:#687687">-</span><span style="color:#0000cd">1000</span><span style="color:#000">;</span></div><div class="t mono" style="left:18.4px;top:99.7px;font-size:18.3px;line-height:20px;width:18.6px;text-align:right;color:#333">5</div><div class="t mono" style="left:58.5px;top:123.7px;font-size:18.3px;line-height:20px;-webkit-text-stroke:0.2px"><span style="color:#000">} </span><span style="color:#0000ff">else</span><span style="color:#000"> </span><span style="color:#0000ff">if</span><span style="color:#000"> (value </span><span style="color:#687687">&gt;</span><span style="color:#000"> </span><span style="color:#0000cd">1000</span><span style="color:#000">) {</span></div><div class="t mono" style="left:18.4px;top:123.7px;font-size:18.3px;line-height:20px;width:18.6px;text-align:right;color:#333">6</div><div class="t mono" style="left:58.5px;top:146.7px;font-size:18.3px;line-height:20px;-webkit-text-stroke:0.2px"><span style="color:#000">    value </span><span style="color:#687687">=</span><span style="color:#000"> </span><span style="color:#0000cd">1000</span><span style="color:#000">;</span></div><div class="t mono" style="left:18.4px;top:146.7px;font-size:18.3px;line-height:20px;width:18.6px;text-align:right;color:#333">7</div><div class="t mono" style="left:58.5px;top:170.7px;font-size:18.3px;line-height:20px;-webkit-text-stroke:0.2px"><span style="color:#000">}</span></div><div class="t mono" style="left:18.4px;top:170.7px;font-size:18.3px;line-height:20px;width:18.6px;text-align:right;color:#333">8</div><svg width="8" height="6" viewBox="0 0 8 6" style="left:41.40px;top:81.40px"><path d="M0.8 0.6H7.2L4 4.4z" fill="#777"/></svg><svg width="8" height="6" viewBox="0 0 8 6" style="left:41.40px;top:128.90px"><path d="M0.8 0.6H7.2L4 4.4z" fill="#777"/></svg></div>
<div class="abs " style="left:0.0px;top:787.75px;width:1125px;height:66px;background:#fff"></div>
<div class="t " style="letter-spacing:0.503px;left:957.0999999999999px;top:812.25px;font-size:17.5px;line-height:20px;color:#1c1e35;-webkit-text-stroke:0.55px #1c1e35">Cancel</div>
<div class="abs " style="left:1035.5px;top:799.25px;width:80px;height:45px;background:#1c1e35;border-radius:5px;box-shadow:0 2px 3px rgba(0,0,0,.3)"></div>
<div class="t " style="letter-spacing:0.042px;left:1055.1px;top:812.25px;font-size:17.5px;line-height:20px;color:#fff;font-weight:700">Save</div>
</div>
</body>
</html>
